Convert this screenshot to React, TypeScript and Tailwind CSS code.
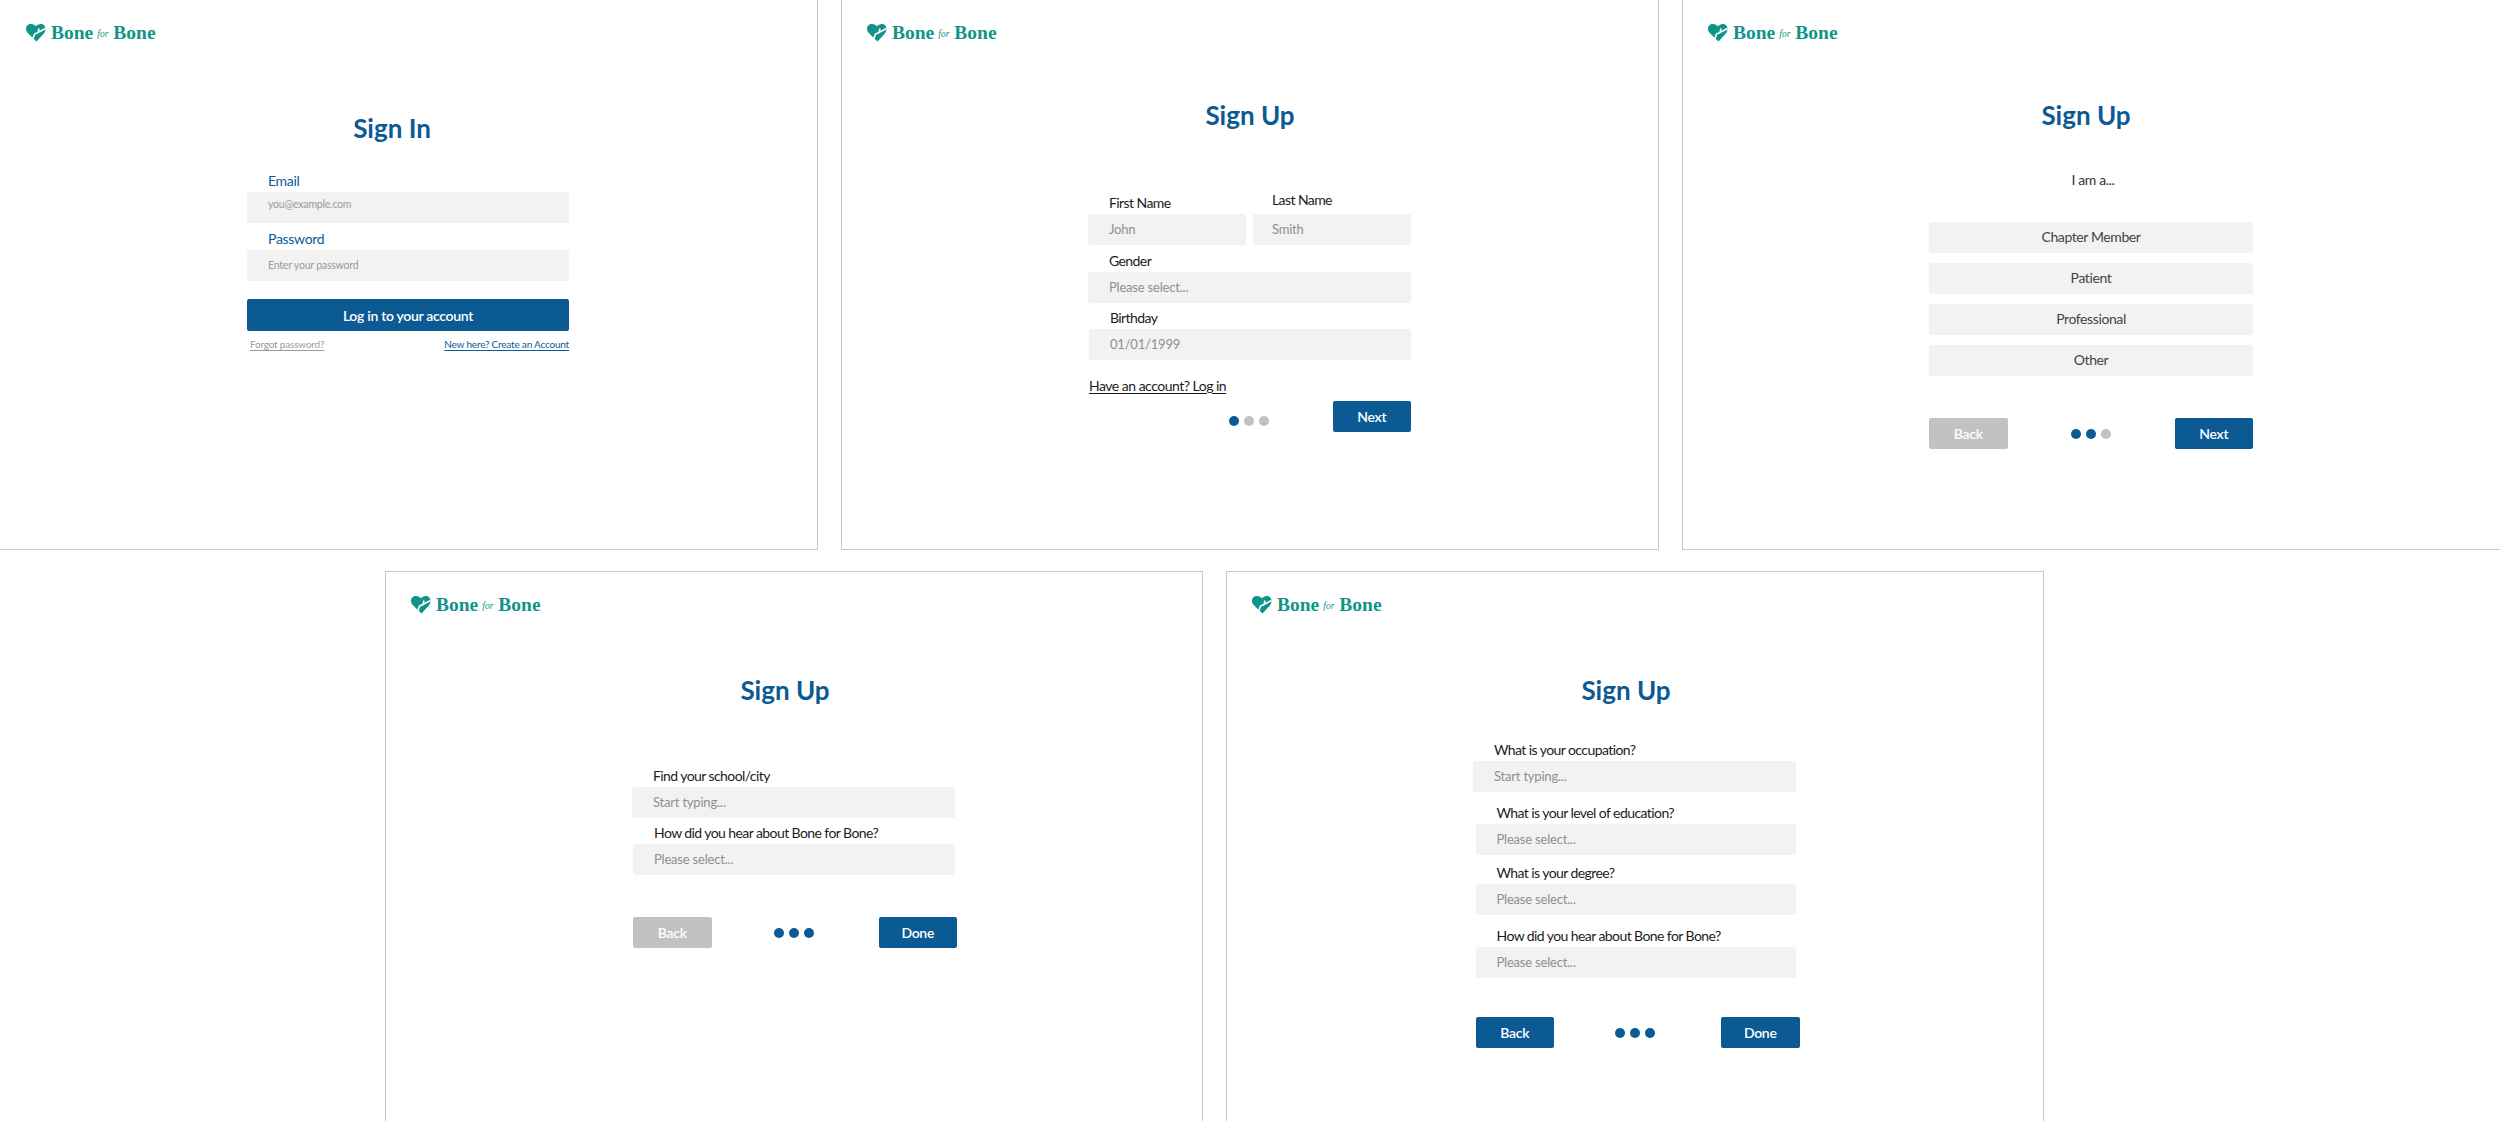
const font = "font-['Lato','Noto_Sans',sans-serif]";

function Logo() {
  return (
    <div className="flex items-center h-[20px] text-[#10948a]">
      <svg width="20" height="18" viewBox="0 0 20 18" className="shrink-0">
        <path
          fill="#10948a"
          d="M5 0C2 0 0 2 0 5c0 2.200 1.400 3.800 3 5.200L10.500 17.600l6-6.600C18.200 9.200 19.500 7.500 19.500 5c0-3-2-5-4.800-5C12.700 0 11.200 1 10 2.300 8.800 1 7.200 0 5 0Z"
        />
        <polyline points="19.500,4.500 12,8.500 13,4.500" fill="none" stroke="#fff" strokeWidth="1.600" />
        <polyline points="12,8.500 8.500,10 7,14.500" fill="none" stroke="#fff" strokeWidth="1.600" />
      </svg>
      <span className="ml-[5px] font-['Liberation_Serif',serif] font-bold text-[19.500px] leading-none">Bone</span>
      <span className="ml-[4px] mt-[3px] font-['Liberation_Serif',serif] italic text-[9.500px] leading-none">for</span>
      <span className="ml-[5px] font-['Liberation_Serif',serif] font-bold text-[19.500px] leading-none">Bone</span>
    </div>
  );
}

function Dots({ on, className = "" }: { on: number; className?: string }) {
  return (
    <div className={"flex gap-[5px] " + className}>
      {[0, 1, 2].map((i) => (
        <span key={i} className={i < on ? "size-[10px] rounded-full bg-[#0b5a94]" : "size-[10px] rounded-full bg-[#c2c2c2]"} />
      ))}
    </div>
  );
}

function Btn({ label, muted }: { label: string; muted?: boolean }) {
  return (
    <button className={(muted ? "bg-[#c2c2c2] " : "bg-[#0b5a94] ") + "w-[78.500px] h-[31px] rounded-[2px] text-white text-[14px] tracking-[-0.300px] font-semibold"}>
      {label}
    </button>
  );
}

function Field({ label, hint, labelClass = "text-[#1c1c1c] text-[14px] tracking-[-0.580px]", hintClass = "text-[#8f8f8f] text-[13px] tracking-[-0.200px]" }: { label: string; hint: string; labelClass?: string; hintClass?: string }) {
  return (
    <div>
      <p className={"h-[17px] leading-[17px] pl-[21px] mb-[3px] " + labelClass}>{label}</p>
      <div className={"h-[31px] bg-[#f2f2f2] rounded-[2px] pl-[21px] flex items-center " + hintClass}>{hint}</div>
    </div>
  );
}

function Title({ text, className }: { text: string; className: string }) {
  return <h2 className={"text-[#0b5a94] text-[26px] font-bold leading-[32px] text-center " + className}>{text}</h2>;
}

function Panel({ className, children }: { className: string; children: React.ReactNode }) {
  return (
    <section className={"w-[818px] shrink-0 border-[#c8c8c8] bg-white " + className}>
      <div className="pl-[25px] pt-[23px]">
        <Logo />
      </div>
      {children}
    </section>
  );
}

export default function App() {
  return (
    <div className={"w-[2500px] h-[1121px] overflow-hidden bg-white " + font}>
      <div className="flex h-[550px]">
        <Panel className="border-r border-b [&>div:first-child]:pl-[26px]">
          <Title text="Sign In" className="mt-[69px] w-[784px]" />
          <div className="ml-[247px] w-[322px] mt-[28px]">
            <Field label="Email" hint="you@example.com" labelClass="text-[#0b5a94] text-[14px] tracking-[-0.300px]" hintClass="text-[#9a9a9a] text-[10.500px] tracking-[-0.200px] pb-[5px]" />
            <div className="mt-[7px]">
              <Field label="Password" hint="Enter your password" labelClass="text-[#0b5a94] text-[14px] tracking-[-0.300px]" hintClass="text-[#9a9a9a] text-[10.500px] tracking-[-0.200px]" />
            </div>
            <button className="mt-[18px] w-full h-[32px] rounded-[2px] bg-[#0b5a94] text-white text-[14px] tracking-[-0.300px] font-semibold">Log in to your account</button>
            <div className="mt-[7px] flex justify-between text-[10px] tracking-[-0.200px] leading-[13px] px-[3px]">
              <a className="text-[#9a9a9a] underline underline-offset-2">Forgot password?</a>
              <a className="text-[#0b5a94] underline underline-offset-2 -mr-[3px]">New here? Create an Account</a>
            </div>
          </div>
        </Panel>

        <Panel className="ml-[23px] border-x border-b">
          <Title text="Sign Up" className="mt-[56px] w-[816px]" />
          <div className="ml-[246px] w-[323px] mt-[60px]">
            <div className="flex gap-[7px]">
              <div className="w-[158px] mt-[3px]">
                <Field label="First Name" hint="John" />
              </div>
              <div className="w-[158px]">
                <p className="h-[17px] leading-[17px] pl-[19px] mb-[6px] text-[#1c1c1c] text-[14px] tracking-[-0.580px]">Last Name</p>
                <div className="h-[31px] bg-[#f2f2f2] rounded-[2px] pl-[19px] flex items-center text-[#8f8f8f] text-[13px] tracking-[-0.200px]">Smith</div>
              </div>
            </div>
            <div className="mt-[7px]">
              <Field label="Gender" hint="Please select..." />
            </div>
            <div className="mt-[6px] ml-[1px]">
              <Field label="Birthday" hint="01/01/1999" />
            </div>
            <a className="block mt-[18px] ml-[1px] text-[14px] tracking-[-0.500px] leading-[16px] text-[#1c1c1c] underline underline-offset-2">Have an account? Log in</a>
            <div className="flex items-center mt-[7px]">
              <div className="ml-[141px] mt-[8px]"><Dots on={1} /></div>
              <div className="ml-auto"><Btn label="Next" /></div>
            </div>
          </div>
        </Panel>

        <Panel className="ml-[23px] border-l border-b grow">
          <Title text="Sign Up" className="mt-[56px] w-[806px]" />
          <p className="mt-[39px] w-[820px] text-center text-[14px] tracking-[-0.400px] leading-[19px] text-[#333]">I am a...</p>
          <div className="ml-[246px] w-[324px] mt-[33px] flex flex-col gap-[10px]">
            {["Chapter Member", "Patient", "Professional", "Other"].map((o) => (
              <div key={o} className="h-[31px] pb-[2px] rounded-[2px] bg-[#f2f2f2] flex items-center justify-center text-[14px] tracking-[-0.400px] text-[#444]">{o}</div>
            ))}
            <div className="mt-[32px] flex items-center justify-between">
              <Btn label="Back" muted />
              <Dots on={2} />
              <Btn label="Next" />
            </div>
          </div>
        </Panel>
      </div>

      <div className="flex mt-[21px] pl-[385px] gap-[23px] h-[550px]">
        <Panel className="border-x border-t">
          <Title text="Sign Up" className="mt-[59px] w-[798px]" />
          <div className="ml-[246px] w-[323px] mt-[61px]">
            <Field label="Find your school/city" hint="Start typing..." />
            <div className="mt-[6px] ml-[1px]">
              <Field label="How did you hear about Bone for Bone?" hint="Please select..." />
            </div>
            <div className="ml-[1px] -mr-[2px] mt-[42px] flex items-center justify-between">
              <Btn label="Back" muted />
              <Dots on={3} className="mr-[2px]" />
              <Btn label="Done" />
            </div>
          </div>
        </Panel>

        <Panel className="border-x border-t">
          <Title text="Sign Up" className="mt-[59px] w-[798px]" />
          <div className="ml-[246px] w-[323px] mt-[35px]">
            <Field label="What is your occupation?" hint="Start typing..." />
            <div className="ml-[2.500px] mt-[12px] flex flex-col gap-[9px]">
              <Field label="What is your level of education?" hint="Please select..." />
              <Field label="What is your degree?" hint="Please select..." />
              <div className="mt-[3px]">
                <Field label="How did you hear about Bone for Bone?" hint="Please select..." />
              </div>
            </div>
            <div className="ml-[2.500px] -mr-[3.500px] mt-[39px] flex items-center justify-between">
              <Btn label="Back" />
              <Dots on={3} className="mr-[5px]" />
              <Btn label="Done" />
            </div>
          </div>
        </Panel>
      </div>
    </div>
  );
}
